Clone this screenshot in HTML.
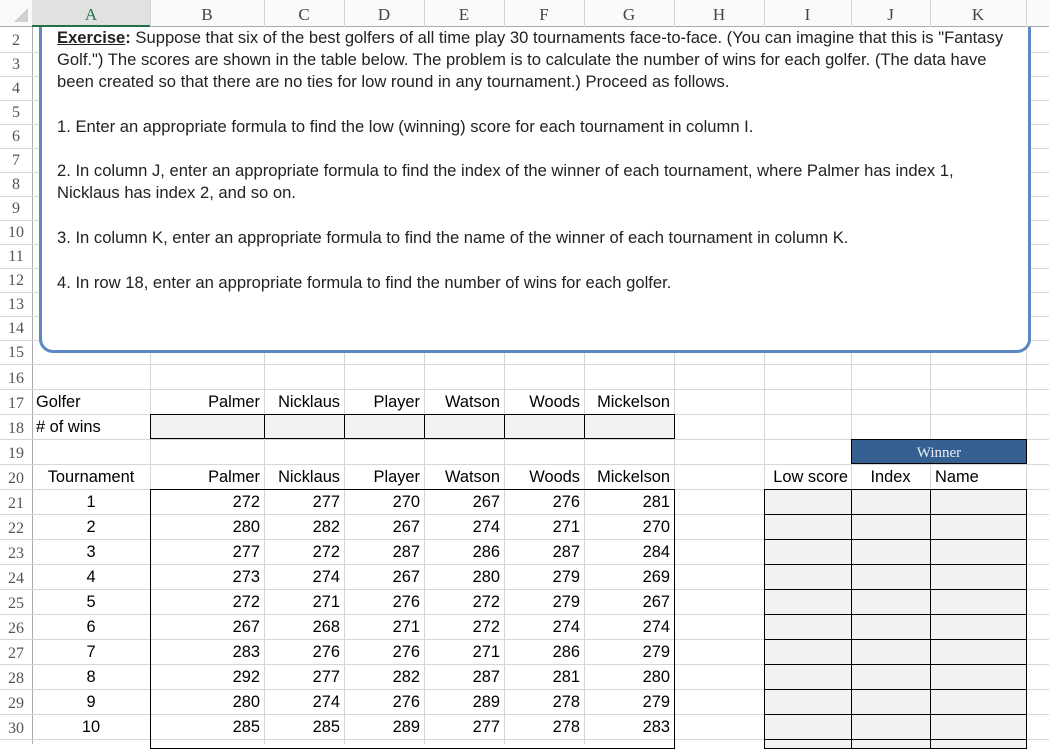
<!DOCTYPE html>
<html><head><meta charset="utf-8"><style>
*{margin:0;padding:0;box-sizing:border-box}
body{width:1049px;height:744px;overflow:hidden;background:#fff;position:relative;font-family:"Liberation Sans",sans-serif}
.v{position:absolute;width:1px;background:#d6d6d6;top:27px;height:717px}
.h{position:absolute;height:1px;background:#d6d6d6;left:0;width:1049px}
.rn{position:absolute;left:0;width:32px;text-align:center;font-family:"Liberation Serif",serif;font-size:16px;color:#555;height:24px;line-height:26px}
.ch{position:absolute;top:0;height:27px;line-height:30px;text-align:center;font-family:"Liberation Serif",serif;font-size:17px;color:#444;z-index:5}
.t{position:absolute;font-size:16.4px;color:#000;height:25px;line-height:27px;white-space:nowrap}
.r{text-align:right;padding-right:4px}
.c{text-align:center}
.g{position:absolute;background:#f2f2f2;border:1px solid #000}
.tx{position:absolute;left:57px;font-size:16.6px;white-space:nowrap;color:#222;line-height:22px;z-index:3}
.hv{position:absolute;top:0;height:27px;width:1px;background:#d6d6d6;z-index:5}
</style></head><body>
<div style="position:absolute;left:39px;top:-12px;width:992px;height:365px;border:3px solid #5b87c2;border-radius:14px;background:#fff;z-index:2"></div>
<div style="position:absolute;left:0;top:0;width:1049px;height:27px;background:#fafafa;border-bottom:1px solid #ababab;z-index:4"></div>
<div style="position:absolute;left:32px;top:0;width:118px;height:27px;background:#e1e1e1;border-bottom:2px solid #217346;z-index:4"></div>
<div style="position:absolute;left:14px;top:8px;width:0;height:0;border-left:14px solid transparent;border-bottom:14px solid #d0d0d0;z-index:5"></div>
<div class="ch" style="left:32px;width:118px;color:#217346">A</div>
<div class="ch" style="left:150px;width:114px">B</div>
<div class="ch" style="left:264px;width:80px">C</div>
<div class="ch" style="left:344px;width:80px">D</div>
<div class="ch" style="left:424px;width:80px">E</div>
<div class="ch" style="left:504px;width:80px">F</div>
<div class="ch" style="left:584px;width:90px">G</div>
<div class="ch" style="left:674px;width:90px">H</div>
<div class="ch" style="left:764px;width:87px">I</div>
<div class="ch" style="left:851px;width:79px">J</div>
<div class="ch" style="left:930px;width:96px">K</div>
<div class="hv" style="left:150px"></div><div class="hv" style="left:264px"></div><div class="hv" style="left:344px"></div>
<div class="hv" style="left:424px"></div><div class="hv" style="left:504px"></div><div class="hv" style="left:584px"></div>
<div class="hv" style="left:674px"></div><div class="hv" style="left:764px"></div><div class="hv" style="left:851px"></div>
<div class="hv" style="left:930px"></div><div class="hv" style="left:1026px"></div>
<div class="v" style="left:32px;background:#ababab"></div>
<div class="v" style="left:150px"></div><div class="v" style="left:264px"></div><div class="v" style="left:344px"></div>
<div class="v" style="left:424px"></div><div class="v" style="left:504px"></div><div class="v" style="left:584px"></div>
<div class="v" style="left:674px"></div><div class="v" style="left:764px"></div><div class="v" style="left:851px"></div>
<div class="v" style="left:930px"></div><div class="v" style="left:1026px"></div>
<div class="h" style="top:52px"></div><div class="h" style="top:76px"></div><div class="h" style="top:100px"></div>
<div class="h" style="top:124px"></div><div class="h" style="top:148px"></div><div class="h" style="top:172px"></div>
<div class="h" style="top:196px"></div><div class="h" style="top:220px"></div><div class="h" style="top:244px"></div>
<div class="h" style="top:268px"></div><div class="h" style="top:292px"></div><div class="h" style="top:316px"></div>
<div class="h" style="top:340px"></div><div class="h" style="top:364px"></div><div class="h" style="top:389px"></div>
<div class="h" style="top:414px"></div><div class="h" style="top:439px"></div><div class="h" style="top:464px"></div>
<div class="h" style="top:489px"></div><div class="h" style="top:514px"></div><div class="h" style="top:539px"></div>
<div class="h" style="top:564px"></div><div class="h" style="top:589px"></div><div class="h" style="top:614px"></div>
<div class="h" style="top:639px"></div><div class="h" style="top:664px"></div><div class="h" style="top:689px"></div>
<div class="h" style="top:714px"></div><div class="h" style="top:739px"></div>
<div class="rn" style="top:28px">2</div><div class="rn" style="top:52px">3</div><div class="rn" style="top:76px">4</div>
<div class="rn" style="top:100px">5</div><div class="rn" style="top:124px">6</div><div class="rn" style="top:148px">7</div>
<div class="rn" style="top:172px">8</div><div class="rn" style="top:196px">9</div><div class="rn" style="top:220px">10</div>
<div class="rn" style="top:244px">11</div><div class="rn" style="top:268px">12</div><div class="rn" style="top:292px">13</div>
<div class="rn" style="top:316px">14</div><div class="rn" style="top:340px">15</div>
<div class="rn" style="top:365px;height:25px;line-height:27px">16</div><div class="rn" style="top:390px;height:25px;line-height:27px">17</div>
<div class="rn" style="top:415px;height:25px;line-height:27px">18</div><div class="rn" style="top:440px;height:25px;line-height:27px">19</div>
<div class="rn" style="top:465px;height:25px;line-height:27px">20</div><div class="rn" style="top:490px;height:25px;line-height:27px">21</div>
<div class="rn" style="top:515px;height:25px;line-height:27px">22</div><div class="rn" style="top:540px;height:25px;line-height:27px">23</div>
<div class="rn" style="top:565px;height:25px;line-height:27px">24</div><div class="rn" style="top:590px;height:25px;line-height:27px">25</div>
<div class="rn" style="top:615px;height:25px;line-height:27px">26</div><div class="rn" style="top:640px;height:25px;line-height:27px">27</div>
<div class="rn" style="top:665px;height:25px;line-height:27px">28</div><div class="rn" style="top:690px;height:25px;line-height:27px">29</div>
<div class="rn" style="top:715px;height:25px;line-height:27px">30</div>
<div class="tx" style="top:27px"><b><u>Exercise</u>:</b> Suppose that six of the best golfers of all time play 30 tournaments face-to-face. (You can imagine that this is "Fantasy</div>
<div class="tx" style="top:49px">Golf.") The scores are shown in the table below. The problem is to calculate the number of wins for each golfer. (The data have</div>
<div class="tx" style="top:71px">been created so that there are no ties for low round in any tournament.) Proceed as follows.</div>
<div class="tx" style="top:116px">1. Enter an appropriate formula to find the low (winning) score for each tournament in column I.</div>
<div class="tx" style="top:160px">2. In column J, enter an appropriate formula to find the index of the winner of each tournament, where Palmer has index 1,</div>
<div class="tx" style="top:182px">Nicklaus has index 2, and so on.</div>
<div class="tx" style="top:227px">3. In column K, enter an appropriate formula to find the name of the winner of each tournament in column K.</div>
<div class="tx" style="top:272px">4. In row 18, enter an appropriate formula to find the number of wins for each golfer.</div>
<div class="t" style="left:36px;top:389px">Golfer</div>
<div class="t" style="left:36px;top:414px"># of wins</div>
<div class="t r" style="left:150px;width:114px;top:389px">Palmer</div>
<div class="t r" style="left:264px;width:80px;top:389px">Nicklaus</div>
<div class="t r" style="left:344px;width:80px;top:389px">Player</div>
<div class="t r" style="left:424px;width:80px;top:389px">Watson</div>
<div class="t r" style="left:504px;width:80px;top:389px">Woods</div>
<div class="t r" style="left:584px;width:90px;top:389px">Mickelson</div>
<div class="g" style="left:150px;top:414px;width:115px;height:25px"></div>
<div class="g" style="left:264px;top:414px;width:81px;height:25px"></div>
<div class="g" style="left:344px;top:414px;width:81px;height:25px"></div>
<div class="g" style="left:424px;top:414px;width:81px;height:25px"></div>
<div class="g" style="left:504px;top:414px;width:81px;height:25px"></div>
<div class="g" style="left:584px;top:414px;width:91px;height:25px"></div>
<div style="position:absolute;left:851px;top:439px;width:176px;height:25px;background:#366092;border:1px solid #000;color:#e8eef6;font-family:'Liberation Serif',serif;font-size:15px;text-align:center;line-height:26px">Winner</div>
<div class="t c" style="left:32px;width:118px;top:464px">Tournament</div>
<div class="t r" style="left:150px;width:114px;top:464px">Palmer</div>
<div class="t r" style="left:264px;width:80px;top:464px">Nicklaus</div>
<div class="t r" style="left:344px;width:80px;top:464px">Player</div>
<div class="t r" style="left:424px;width:80px;top:464px">Watson</div>
<div class="t r" style="left:504px;width:80px;top:464px">Woods</div>
<div class="t r" style="left:584px;width:90px;top:464px">Mickelson</div>
<div class="t r" style="left:764px;width:87px;top:464px;padding-right:3px">Low score</div>
<div class="t c" style="left:851px;width:79px;top:464px">Index</div>
<div class="t" style="left:935px;top:464px">Name</div>
<div style="position:absolute;left:150px;top:489px;width:525px;height:260px;border:1px solid #000"></div>
<div style="position:absolute;left:764px;top:489px;width:263px;height:260px;background:#f2f2f2;border:1px solid #000;
background-image:linear-gradient(#000,#000),linear-gradient(#000,#000),repeating-linear-gradient(to bottom,transparent 0,transparent 24px,#000 24px,#000 25px);
background-size:1px 100%,1px 100%,100% 100%;background-position:86px 0,165px 0,0 0;background-repeat:no-repeat"></div>
<div class="t c" style="left:32px;width:118px;top:489px">1</div><div class="t r" style="left:150px;width:114px;top:489px">272</div><div class="t r" style="left:264px;width:80px;top:489px">277</div><div class="t r" style="left:344px;width:80px;top:489px">270</div><div class="t r" style="left:424px;width:80px;top:489px">267</div><div class="t r" style="left:504px;width:80px;top:489px">276</div><div class="t r" style="left:584px;width:90px;top:489px">281</div>
<div class="t c" style="left:32px;width:118px;top:514px">2</div><div class="t r" style="left:150px;width:114px;top:514px">280</div><div class="t r" style="left:264px;width:80px;top:514px">282</div><div class="t r" style="left:344px;width:80px;top:514px">267</div><div class="t r" style="left:424px;width:80px;top:514px">274</div><div class="t r" style="left:504px;width:80px;top:514px">271</div><div class="t r" style="left:584px;width:90px;top:514px">270</div>
<div class="t c" style="left:32px;width:118px;top:539px">3</div><div class="t r" style="left:150px;width:114px;top:539px">277</div><div class="t r" style="left:264px;width:80px;top:539px">272</div><div class="t r" style="left:344px;width:80px;top:539px">287</div><div class="t r" style="left:424px;width:80px;top:539px">286</div><div class="t r" style="left:504px;width:80px;top:539px">287</div><div class="t r" style="left:584px;width:90px;top:539px">284</div>
<div class="t c" style="left:32px;width:118px;top:564px">4</div><div class="t r" style="left:150px;width:114px;top:564px">273</div><div class="t r" style="left:264px;width:80px;top:564px">274</div><div class="t r" style="left:344px;width:80px;top:564px">267</div><div class="t r" style="left:424px;width:80px;top:564px">280</div><div class="t r" style="left:504px;width:80px;top:564px">279</div><div class="t r" style="left:584px;width:90px;top:564px">269</div>
<div class="t c" style="left:32px;width:118px;top:589px">5</div><div class="t r" style="left:150px;width:114px;top:589px">272</div><div class="t r" style="left:264px;width:80px;top:589px">271</div><div class="t r" style="left:344px;width:80px;top:589px">276</div><div class="t r" style="left:424px;width:80px;top:589px">272</div><div class="t r" style="left:504px;width:80px;top:589px">279</div><div class="t r" style="left:584px;width:90px;top:589px">267</div>
<div class="t c" style="left:32px;width:118px;top:614px">6</div><div class="t r" style="left:150px;width:114px;top:614px">267</div><div class="t r" style="left:264px;width:80px;top:614px">268</div><div class="t r" style="left:344px;width:80px;top:614px">271</div><div class="t r" style="left:424px;width:80px;top:614px">272</div><div class="t r" style="left:504px;width:80px;top:614px">274</div><div class="t r" style="left:584px;width:90px;top:614px">274</div>
<div class="t c" style="left:32px;width:118px;top:639px">7</div><div class="t r" style="left:150px;width:114px;top:639px">283</div><div class="t r" style="left:264px;width:80px;top:639px">276</div><div class="t r" style="left:344px;width:80px;top:639px">276</div><div class="t r" style="left:424px;width:80px;top:639px">271</div><div class="t r" style="left:504px;width:80px;top:639px">286</div><div class="t r" style="left:584px;width:90px;top:639px">279</div>
<div class="t c" style="left:32px;width:118px;top:664px">8</div><div class="t r" style="left:150px;width:114px;top:664px">292</div><div class="t r" style="left:264px;width:80px;top:664px">277</div><div class="t r" style="left:344px;width:80px;top:664px">282</div><div class="t r" style="left:424px;width:80px;top:664px">287</div><div class="t r" style="left:504px;width:80px;top:664px">281</div><div class="t r" style="left:584px;width:90px;top:664px">280</div>
<div class="t c" style="left:32px;width:118px;top:689px">9</div><div class="t r" style="left:150px;width:114px;top:689px">280</div><div class="t r" style="left:264px;width:80px;top:689px">274</div><div class="t r" style="left:344px;width:80px;top:689px">276</div><div class="t r" style="left:424px;width:80px;top:689px">289</div><div class="t r" style="left:504px;width:80px;top:689px">278</div><div class="t r" style="left:584px;width:90px;top:689px">279</div>
<div class="t c" style="left:32px;width:118px;top:714px">10</div><div class="t r" style="left:150px;width:114px;top:714px">285</div><div class="t r" style="left:264px;width:80px;top:714px">285</div><div class="t r" style="left:344px;width:80px;top:714px">289</div><div class="t r" style="left:424px;width:80px;top:714px">277</div><div class="t r" style="left:504px;width:80px;top:714px">278</div><div class="t r" style="left:584px;width:90px;top:714px">283</div>
</body></html>
